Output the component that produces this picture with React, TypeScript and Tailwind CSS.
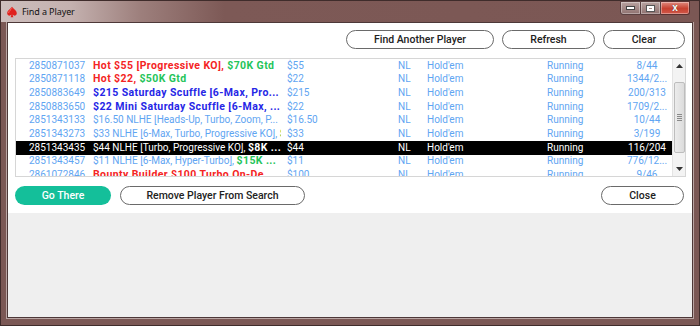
import React from "react";

type Seg = { t: string; c: "lb" | "red" | "green" | "blue" | "white" | "whiteb" };
type Row = { id: string; name: Seg[]; buy: string; pl: string; sel?: boolean };

const rows: Row[] = [
  { id: "2850871037", name: [{ t: "Hot $55 [Progressive KO], ", c: "red" }, { t: "$70K Gtd", c: "green" }], buy: "$55", pl: "8/44" },
  { id: "2850871118", name: [{ t: "Hot $22, ", c: "red" }, { t: "$50K Gtd", c: "green" }], buy: "$22", pl: "1344/2..." },
  { id: "2850883649", name: [{ t: "$215 Saturday Scuffle [6-Max, Pro...", c: "blue" }], buy: "$215", pl: "200/313" },
  { id: "2850883650", name: [{ t: "$22 Mini Saturday Scuffle [6-Max, ...", c: "blue" }], buy: "$22", pl: "1709/2..." },
  { id: "2851343133", name: [{ t: "$16.50 NLHE [Heads-Up, Turbo, Zoom, P...", c: "lb" }], buy: "$16.50", pl: "10/44" },
  { id: "2851343273", name: [{ t: "$33 NLHE [6-Max, Turbo, Progressive KO], ", c: "lb" }, { t: "$5K Gtd", c: "green" }], buy: "$33", pl: "3/199" },
  { id: "2851343435", name: [{ t: "$44 NLHE [Turbo, Progressive KO], ", c: "white" }, { t: "$8K ...", c: "whiteb" }], buy: "$44", pl: "116/204", sel: true },
  { id: "2851343457", name: [{ t: "$11 NLHE [6-Max, Hyper-Turbo], ", c: "lb" }, { t: "$15K ...", c: "green" }], buy: "$11", pl: "776/12..." },
  { id: "2861072846", name: [{ t: "Bounty Builder $100 Turbo On-De...", c: "red" }], buy: "$100", pl: "9/46" },
];

const segClass: Record<Seg["c"], string> = {
  lb: "text-[#5fa5f2]",
  red: "text-[#f42424] font-bold text-[10.5px] tracking-[0.4px]",
  green: "text-[#25c45a] font-bold text-[10.5px] tracking-[0.4px]",
  blue: "text-[#2626e6] font-bold text-[10.5px] tracking-[0.4px]",
  white: "text-white",
  whiteb: "text-white font-bold text-[10.5px] tracking-[0.4px]",
};

function Btn({ label, className = "" }: { label: string; className?: string }) {
  return (
    <div
      className={`h-[19px] rounded-full border border-[#6a6a6a] bg-white flex items-center justify-center text-[10.5px] font-medium text-[#222] ${className}`}
    >
      {label}
    </div>
  );
}

export default function App() {
  return (
    <div
      className="w-[700px] h-[326px] overflow-hidden flex flex-col bg-[#7b5855] border border-[#3f2c2b]"
      style={{ fontFamily: "Roboto, 'Liberation Sans', sans-serif" }}
    >
      {/* title bar */}
      <div className="h-[21px] flex items-center relative bg-[linear-gradient(90deg,#cdbebd_0%,#c4b1af_10%,#9d7f7c_20%,#7d5956_32%,#7b5754_100%)]">
        <svg width="12" height="12" viewBox="0 0 12 12" className="ml-[5px]">
          <path d="M6 0.8 C4.6 3 1.2 4.6 1.2 7.2 C1.2 8.8 2.6 9.8 4 9.6 C4.8 9.5 5.3 9 5.5 8.6 L4.6 11.2 L7.4 11.2 L6.5 8.6 C6.7 9 7.2 9.5 8 9.6 C9.4 9.8 10.8 8.8 10.8 7.2 C10.8 4.6 7.4 3 6 0.8 Z" fill="#e0221e" />
          <path d="M6 2.2 C5 3.8 2.6 5 2.6 7" stroke="#ff8a80" strokeWidth="0.7" fill="none" />
        </svg>
        <span className="ml-[4px] text-[9px] tracking-[-0.1px] text-[#111]" style={{ fontFamily: "'Noto Sans', sans-serif" }}>
          Find a Player
        </span>
        <div className="absolute right-[9px] top-0 flex">
          <div className="w-[21px] h-[14px] border border-[#5a4040] rounded-bl-[3px] bg-[linear-gradient(#b9a3a1,#8f7270)] flex items-end justify-center pb-[4px] shadow-[inset_0_0_0_1px_rgba(255,255,255,0.35)]">
            <div className="w-[7px] h-[2px] bg-white border border-[#444] box-content" />
          </div>
          <div className="w-[20px] h-[14px] border-y border-r border-[#5a4040] bg-[linear-gradient(#b9a3a1,#8f7270)] flex items-center justify-center shadow-[inset_0_0_0_1px_rgba(255,255,255,0.35)]">
            <div className="w-[7px] h-[5px] border-2 border-white outline outline-1 outline-[#555]" />
          </div>
          <div className="w-[29px] h-[14px] border-y border-r border-[#5a3030] rounded-br-[3px] bg-[linear-gradient(#e08a7e,#c7402f_55%,#d0584a)] flex items-center justify-center shadow-[inset_0_0_0_1px_rgba(255,255,255,0.35)]">
            <span className="text-white text-[10px] font-bold leading-none" style={{ fontFamily: "'Liberation Sans', sans-serif", textShadow: "0 0 1px #333" }}>
              x
            </span>
          </div>
        </div>
      </div>

      {/* client */}
      <div className="flex-1 mx-[6px] mb-[7px] border border-[#4d3838] shadow-[0_0_0_1px_#b9a5a3] flex flex-col bg-[#efefef]">
        <div className="bg-white px-[7px] pt-[7px] pb-[8px] flex flex-col">
          <div className="flex justify-end gap-[8px]">
            <Btn label="Find Another Player" className="w-[148px]" />
            <Btn label="Refresh" className="w-[93px]" />
            <Btn label="Clear" className="w-[82px]" />
          </div>

          <div className="mt-[9px] h-[119px] border border-[#d6d6d6] flex overflow-hidden w-[671px]">
            <div className="w-[656px] overflow-hidden text-[10px] leading-none">
              {rows.map((r) => (
                <div
                  key={r.id}
                  className={`h-[13.67px] flex items-center whitespace-nowrap ${r.sel ? "bg-black text-white" : "text-[#5fa5f2]"}`}
                >
                  <div className="w-[77px] shrink-0 pl-[13px]">{r.id}</div>
                  <div className="w-[188px] shrink-0 overflow-hidden">
                    {r.name.map((s, i) => (
                      <span key={i} className={segClass[s.c]}>
                        {s.t}
                      </span>
                    ))}
                  </div>
                  <div className="w-[6px] shrink-0" />
                  <div className="w-[111px] shrink-0">{r.buy}</div>
                  <div className="w-[29px] shrink-0">NL</div>
                  <div className="w-[120px] shrink-0">Hold'em</div>
                  <div className="w-[75px] shrink-0">Running</div>
                  <div className="w-[50px] shrink-0 text-center">{r.pl}</div>
                </div>
              ))}
            </div>
            <div className="w-[13px] bg-[#f3f3f3] border-l border-[#e4e4e4] flex flex-col items-center">
              <div className="h-[14px] flex items-center justify-center">
                <svg width="7" height="4" viewBox="0 0 7 4"><path d="M3.5 0 L7 4 L0 4 Z" fill="#333" /></svg>
              </div>
              <div className="mt-[9px] w-[11px] h-[71px] rounded-[2px] border border-[#bdbdbd] bg-[linear-gradient(90deg,#ececec,#dcdcdc)] flex items-center justify-center">
                <div className="flex flex-col gap-[1px]">
                  <div className="w-[5px] h-[1px] bg-[#8a8a8a]" />
                  <div className="w-[5px] h-[1px] bg-[#8a8a8a]" />
                  <div className="w-[5px] h-[1px] bg-[#8a8a8a]" />
                  <div className="w-[5px] h-[1px] bg-[#8a8a8a]" />
                </div>
              </div>
              <div className="flex-1" />
              <div className="h-[14px] flex items-center justify-center">
                <svg width="7" height="4" viewBox="0 0 7 4"><path d="M0 0 L7 0 L3.5 4 Z" fill="#333" /></svg>
              </div>
            </div>
          </div>

          <div className="mt-[9px] flex items-center">
            <div className="w-[96px] h-[19px] rounded-full bg-[#14bf9a] flex items-center justify-center text-[10.5px] font-medium text-white">
              Go There
            </div>
            <Btn label="Remove Player From Search" className="ml-[9px] w-[185px]" />
            <div className="flex-1" />
            <Btn label="Close" className="w-[83px] mr-[1px]" />
          </div>
        </div>
        <div className="flex-1 bg-[#efefef]" />
      </div>
    </div>
  );
}
